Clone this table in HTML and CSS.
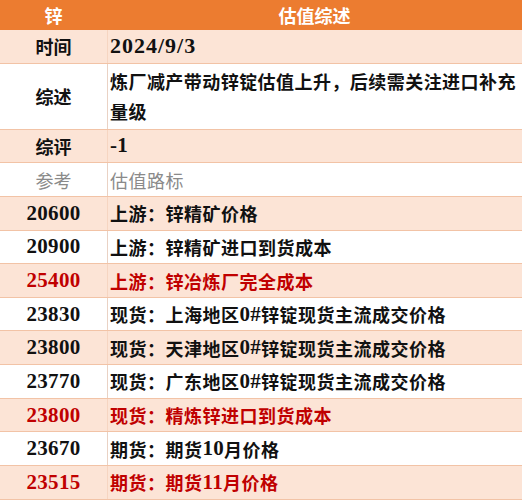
FILE: index.html
```html
<!DOCTYPE html>
<html lang="zh">
<head>
<meta charset="utf-8">
<link rel="stylesheet" href="styles.css">
</head>
<body>
<div class="table">
  <div class="row head"><div class="c1">锌</div><div class="c2">估值综述</div></div>
  <div class="row peach"><div class="c1">时间</div><div class="c2"><span class="num date">2024/9/3</span></div></div>
  <div class="row white tall"><div class="c1">综述</div><div class="c2"><span class="wrap">炼厂减产带动锌锭估值上升，后续需关注进口补充<br>量级</span></div></div>
  <div class="row peach"><div class="c1">综评</div><div class="c2"><span class="num">-1</span></div></div>
  <div class="row white gray"><div class="c1">参考</div><div class="c2">估值路标</div></div>
  <div class="row peach"><div class="c1"><span class="num">20600</span></div><div class="c2">上游：锌精矿价格</div></div>
  <div class="row white"><div class="c1"><span class="num">20900</span></div><div class="c2">上游：锌精矿进口到货成本</div></div>
  <div class="row peach red"><div class="c1"><span class="num">25400</span></div><div class="c2">上游：锌冶炼厂完全成本</div></div>
  <div class="row white"><div class="c1"><span class="num">23830</span></div><div class="c2">现货：上海地区<span class="num">0#</span>锌锭现货主流成交价格</div></div>
  <div class="row peach"><div class="c1"><span class="num">23800</span></div><div class="c2">现货：天津地区<span class="num">0#</span>锌锭现货主流成交价格</div></div>
  <div class="row white"><div class="c1"><span class="num">23770</span></div><div class="c2">现货：广东地区<span class="num">0#</span>锌锭现货主流成交价格</div></div>
  <div class="row peach red"><div class="c1"><span class="num">23800</span></div><div class="c2">现货：精炼锌进口到货成本</div></div>
  <div class="row white"><div class="c1"><span class="num">23670</span></div><div class="c2">期货：期货<span class="num">10</span>月价格</div></div>
  <div class="row peach red"><div class="c1"><span class="num">23515</span></div><div class="c2">期货：期货<span class="num">11</span>月价格</div></div>
</div>
</body>
</html>
```
FILE: styles.css
```css
html, body {
  margin: 0;
  padding: 0;
  background: #ffffff;
}
.table {
  width: 522px;
  font-family: "Noto Sans CJK SC", sans-serif;
  font-size: 18px;
  font-weight: bold;
  color: #111111;
}
.num {
  font-family: "Liberation Serif", "Noto Sans CJK SC", serif;
  font-size: 21px;
  font-weight: bold;
  letter-spacing: 0.3px;
}
.date {
  font-size: 22px;
  letter-spacing: 1px;
}
.row {
  display: grid;
  grid-template-columns: 107px 1fr;
  height: 33.65px;
  box-sizing: border-box;
  border-bottom: 1px solid #f2c3a6;
}
.row > div {
  display: flex;
  align-items: center;
}
.c1 {
  justify-content: center;
}
.c2 {
  padding-left: 2px;
  border-left: 1px solid #ead2c4;
  letter-spacing: 0.5px;
}
.head {
  height: 30px;
  background: #ec7c30;
  color: #ffffff;
  border-bottom: none;
}
.head .c2 {
  justify-content: center;
  border-left: none;
  padding-left: 0;
  letter-spacing: 0;
}
.peach {
  background: #fce4d6;
}
.peach .c2 {
  border-left-color: #f6d5c1;
}
.white {
  background: #ffffff;
}
.tall {
  height: 66px;
}
.wrap {
  display: block;
  line-height: 30px;
  white-space: nowrap;
  letter-spacing: 0.45px;
}
.gray {
  color: #8a8a8a;
  font-weight: normal;
}
.red {
  color: #c00000;
}
```
